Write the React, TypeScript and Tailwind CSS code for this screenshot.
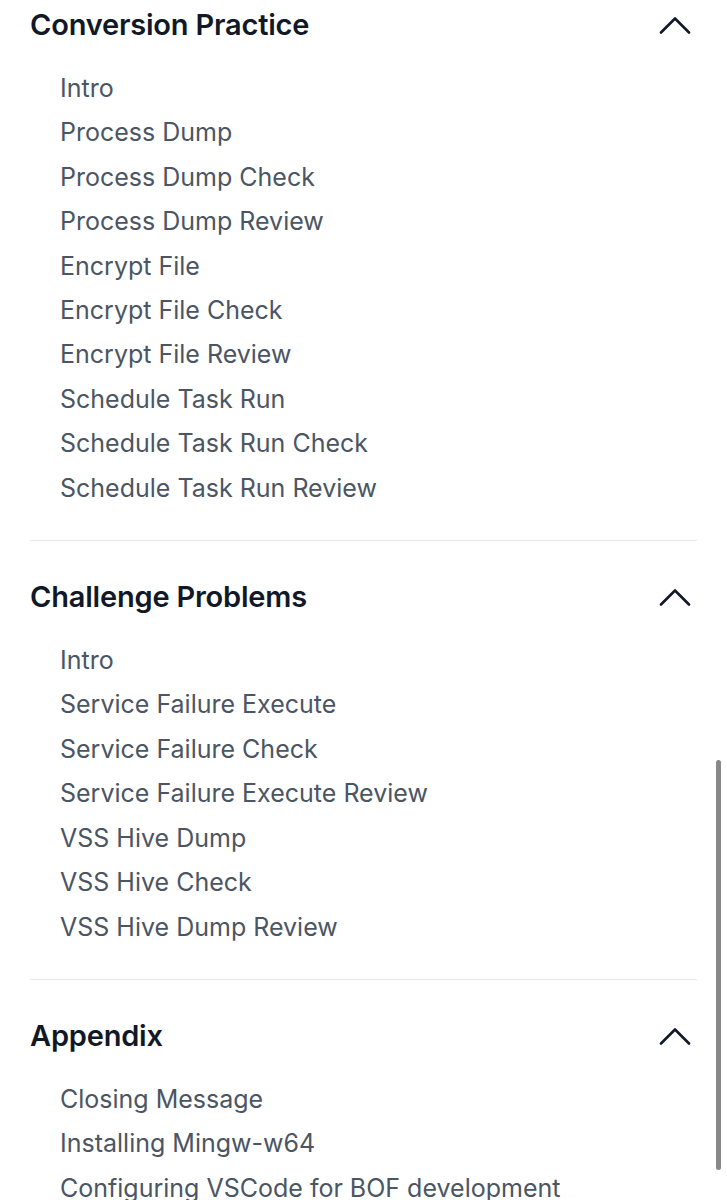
import type { ReactNode } from 'react'

interface Section {
  title: string
  items: string[]
}

const sections: Section[] = [
  {
    title: 'Conversion Practice',
    items: [
      'Intro',
      'Process Dump',
      'Process Dump Check',
      'Process Dump Review',
      'Encrypt File',
      'Encrypt File Check',
      'Encrypt File Review',
      'Schedule Task Run',
      'Schedule Task Run Check',
      'Schedule Task Run Review',
    ],
  },
  {
    title: 'Challenge Problems',
    items: [
      'Intro',
      'Service Failure Execute',
      'Service Failure Check',
      'Service Failure Execute Review',
      'VSS Hive Dump',
      'VSS Hive Check',
      'VSS Hive Dump Review',
    ],
  },
  {
    title: 'Appendix',
    items: [
      'Closing Message',
      'Installing Mingw-w64',
      'Configuring VSCode for BOF development',
    ],
  },
]

function ChevronUp() {
  return (
    <svg width="32" height="18" viewBox="0 0 32 18" fill="none" className="mr-[6px]">
      <polyline
        points="2,16.5 16,2.5 30,16.5"
        stroke="#111827"
        strokeWidth="2.6"
        strokeLinecap="round"
        strokeLinejoin="round"
      />
    </svg>
  )
}

function SectionBlock({ section, first, last }: { section: Section; first: boolean; last: boolean }): ReactNode {
  return (
    <section className={`${first ? 'pt-0' : 'pt-[31px]'} ${last ? '' : 'border-b border-[#e5e7eb] pb-[30px]'}`}>
      <div className="flex h-[50px] items-center justify-between">
        <h2 className="text-[29px] font-semibold tracking-[-0.2px] text-[#111827]">{section.title}</h2>
        <ChevronUp />
      </div>
      <ul className="mt-[16px] pl-[30px]">
        {section.items.map((item) => (
          <li key={item} className="text-[25px] leading-[44.4px] text-[#4b5563]">
            {item}
          </li>
        ))}
      </ul>
    </section>
  )
}

export default function App() {
  return (
    <div
      className="relative min-h-[1200px] overflow-hidden bg-white px-[30px]"
      style={{ fontFamily: 'Inter, "Noto Sans", sans-serif' }}
    >
      {sections.map((section, i) => (
        <SectionBlock
          key={section.title}
          section={section}
          first={i === 0}
          last={i === sections.length - 1}
        />
      ))}
      <div className="absolute right-[6px] top-[760px] h-[410px] w-[5px] rounded-full bg-[#888888]" />
    </div>
  )
}
